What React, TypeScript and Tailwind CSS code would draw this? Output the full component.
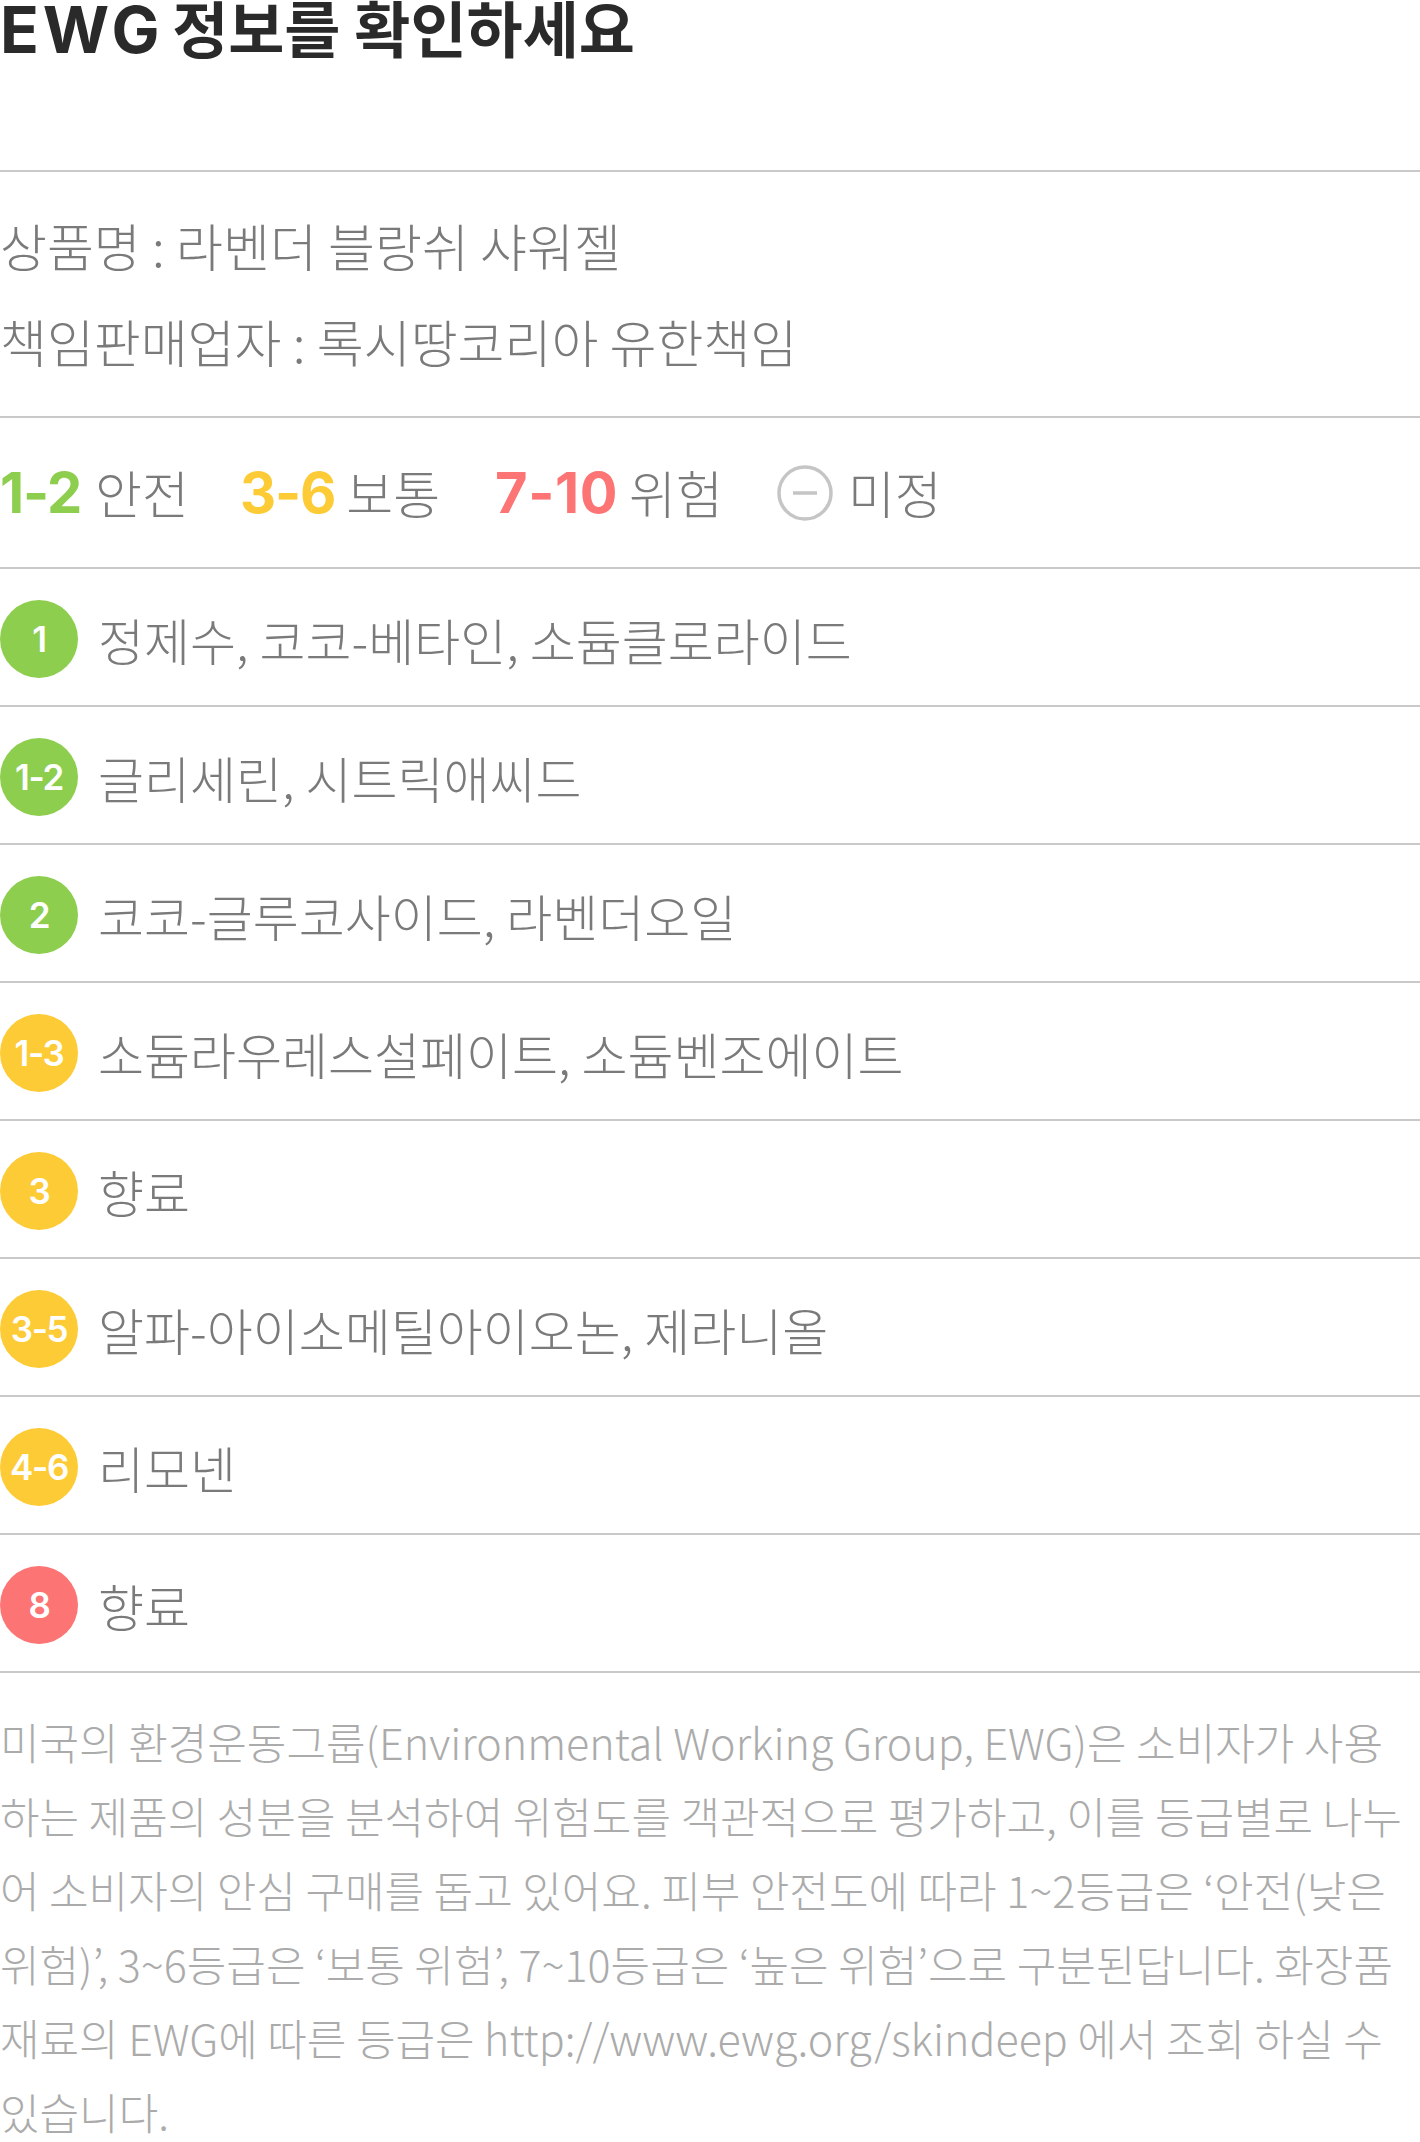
import React from 'react';

type Grade = {
  label: string;
  color: string;
  names: string;
};

const grades: Grade[] = [
  { label: '1', color: 'bg-[#8ece4f]', names: '정제수, 코코-베타인, 소듐클로라이드' },
  { label: '1-2', color: 'bg-[#8ece4f]', names: '글리세린, 시트릭애씨드' },
  { label: '2', color: 'bg-[#8ece4f]', names: '코코-글루코사이드, 라벤더오일' },
  { label: '1-3', color: 'bg-[#fdcb36]', names: '소듐라우레스설페이트, 소듐벤조에이트' },
  { label: '3', color: 'bg-[#fdcb36]', names: '향료' },
  { label: '3-5', color: 'bg-[#fdcb36]', names: '알파-아이소메틸아이오논, 제라니올' },
  { label: '4-6', color: 'bg-[#fdcb36]', names: '리모넨' },
  { label: '8', color: 'bg-[#fc7474]', names: '향료' },
];

// the description wraps exactly like the original copy
const description = [
  '미국의 환경운동그룹(Environmental Working Group, EWG)은 소비자가 사용',
  '하는 제품의 성분을 분석하여 위험도를 객관적으로 평가하고, 이를 등급별로 나누',
  '어 소비자의 안심 구매를 돕고 있어요. 피부 안전도에 따라 1~2등급은 ‘안전(낮은',
  '위험)’, 3~6등급은 ‘보통 위험’, 7~10등급은 ‘높은 위험’으로 구분된답니다. 화장품',
  '재료의 EWG에 따른 등급은 http://www.ewg.org/skindeep 에서 조회 하실 수',
  '있습니다.',
];

function MinusCircle() {
  return (
    <svg width="56" height="56" viewBox="0 0 56 56" aria-hidden="true">
      <circle cx="28" cy="28" r="26" fill="none" stroke="#c5c5c5" strokeWidth="3.5" />
      <line x1="16" y1="28" x2="40" y2="28" stroke="#c5c5c5" strokeWidth="3.5" />
    </svg>
  );
}

function GradeBadge({ label, color }: { label: string; color: string }) {
  return (
    <div
      className={`flex h-[78px] w-[78px] shrink-0 items-center justify-center rounded-full ${color} font-['Inter','Noto_Sans_CJK_KR',sans-serif] text-[35px] font-semibold tracking-[-0.04em] text-white`}
    >
      {label}
    </div>
  );
}

export default function App() {
  return (
    <div className="w-[1420px] overflow-hidden bg-white font-['Noto_Sans_CJK_KR_Light','Noto_Sans_CJK_KR_DemiLight','Noto_Sans_CJK_KR','Noto_Sans',sans-serif] font-light text-[#7a7a7a]">
      {/* title */}
      <div className="flex h-[172px] flex-col border-b-2 border-[#c9c9c9]">
        <h1 className="-mt-[5px] font-['Noto_Sans_CJK_KR',sans-serif] text-[61px] font-bold leading-[64px] text-[#2a2a2a]">
          <span className="-mr-[5px] font-['Inter','Noto_Sans_CJK_KR',sans-serif] text-[64px] tracking-[0.06em]">EWG</span> 정보를 확인하세요
        </h1>
      </div>

      {/* product info */}
      <div className="border-b-2 border-[#c9c9c9] pt-[25px] pb-[27px] text-[51px] leading-[96px]">
        <p>상품명 : 라벤더 블랑쉬 샤워젤</p>
        <p>책임판매업자 : 록시땅코리아 유한책임</p>
      </div>

      {/* legend */}
      <div className="flex h-[151px] items-center border-b-2 border-[#c9c9c9] text-[51px]">
        <div className="flex items-center gap-[14px]">
          <span className="font-['Inter',sans-serif] text-[56px] font-bold tracking-[-0.02em] text-[#8ece4f]">1-2</span>
          <span>안전</span>
        </div>
        <div className="ml-[51px] flex items-center gap-[11px]">
          <span className="font-['Inter',sans-serif] text-[56px] font-bold tracking-[-0.02em] text-[#fdcb36]">3-6</span>
          <span>보통</span>
        </div>
        <div className="ml-[55px] flex items-center gap-[11px]">
          <span className="font-['Inter',sans-serif] text-[56px] font-bold tracking-[0.01em] text-[#fc7474]">7-10</span>
          <span>위험</span>
        </div>
        <div className="ml-[54px] flex items-center gap-[15px]">
          <MinusCircle />
          <span>미정</span>
        </div>
      </div>

      {/* ingredients */}
      <ul>
        {grades.map((g, i) => (
          <li key={i} className="flex h-[138px] items-center gap-[20px] border-b-2 border-[#c9c9c9] pt-[4px]">
            <GradeBadge label={g.label} color={g.color} />
            <span className="text-[50px]">{g.names}</span>
          </li>
        ))}
      </ul>

      {/* description */}
      <div className="pt-[31px] text-[43px] leading-[74px] text-[#ababab]">
        {description.map((line, i) => (
          <p key={i} className="whitespace-nowrap">
            {line}
          </p>
        ))}
      </div>
    </div>
  );
}
